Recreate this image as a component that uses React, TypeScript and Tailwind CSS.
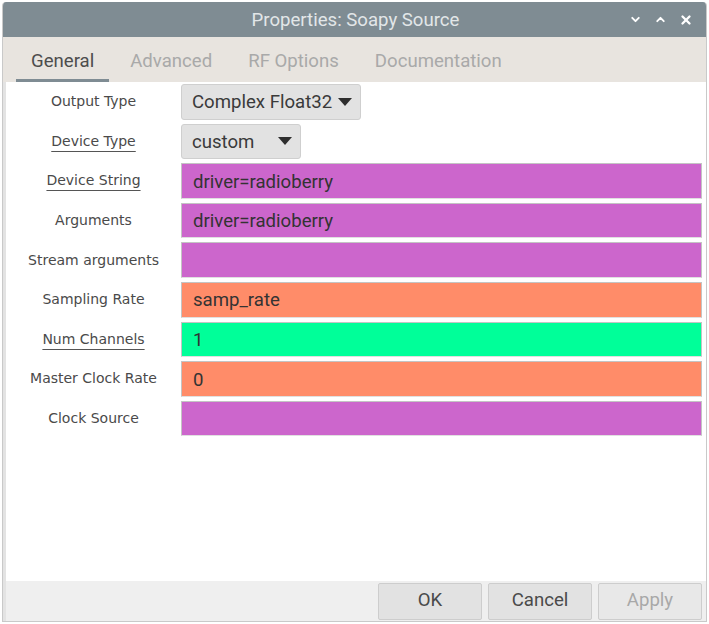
import { ChevronDown, ChevronUp, X } from "lucide-react";

const rows = [
  { label: "Output Type", kind: "combo", value: "Complex Float32", width: "w-[180px]" },
  { label: "Device Type", kind: "combo", value: "custom", width: "w-[120px]", link: true },
  { label: "Device String", kind: "field", value: "driver=radioberry", color: "bg-[#cc66cc]", link: true },
  { label: "Arguments", kind: "field", value: "driver=radioberry", color: "bg-[#cc66cc]" },
  { label: "Stream arguments", kind: "field", value: "", color: "bg-[#cc66cc]" },
  { label: "Sampling Rate", kind: "field", value: "samp_rate", color: "bg-[#ff8c69]" },
  { label: "Num Channels", kind: "field", value: "1", color: "bg-[#00ff99]", link: true },
  { label: "Master Clock Rate", kind: "field", value: "0", color: "bg-[#ff8c69]" },
  { label: "Clock Source", kind: "field", value: "", color: "bg-[#cc66cc]" },
];

const tabs = ["General", "Advanced", "RF Options", "Documentation"];

function Arrow() {
  return (
    <svg width="14" height="8" viewBox="0 0 14 8" className="shrink-0">
      <path d="M0 0 L14 0 L7 8 Z" fill="#2e2e2e" />
    </svg>
  );
}

export default function App() {
  return (
    <div className="w-[709px] h-[624px] bg-white overflow-hidden font-['Roboto',sans-serif]">
      <div className="ml-[2px] mt-[2px] w-[705px] h-[620px] flex flex-col rounded-t-[4px] overflow-hidden border-x border-b border-[#c9c9c9]">
        {/* title bar */}
        <div className="h-[35px] bg-[#7f8c93] flex items-center relative shrink-0">
          <div className="flex-1 text-center text-[18.6px] text-[#e2e6e8] pl-[2px] pt-[2px]">Properties: Soapy Source</div>
          <div className="absolute right-[13px] top-0 h-full flex items-center gap-[12px] text-white">
            <ChevronDown size={13} strokeWidth={3.5} />
            <ChevronUp size={13} strokeWidth={3.5} />
            <X size={14} strokeWidth={4} />
          </div>
        </div>

        {/* tabs */}
        <div className="h-[45px] bg-[#e8e4df] flex items-end pl-[13px] gap-[6px] shrink-0">
          {tabs.map((t, i) => (
            <div
              key={t}
              className={
                "h-full flex items-center px-[15px] text-[18.6px] border-b-[3px] pt-[7px] " +
                (i === 0 ? "border-[#7f8c93] text-[#4d4d4d] px-[14px]" : "border-transparent text-[#a9a9a9]")
              }
            >
              {t}
            </div>
          ))}
        </div>

        {/* content */}
        <div className="flex-1 bg-white border-l-[3px] border-[#e3e3e3] pt-[2px] pr-[4px] flex flex-col gap-[4px]">
          {rows.map((r) => (
            <div key={r.label} className="flex items-center h-[35.6px]">
              <div className="w-[175px] shrink-0 text-center font-['DejaVu_Sans',sans-serif] text-[14px] text-[#4a4a4a]">
                <span className={r.link ? "underline underline-offset-[5px] decoration-[#555]" : ""}>{r.label}</span>
              </div>
              {r.kind === "combo" ? (
                <div
                  className={
                    r.width +
                    " h-full bg-[#e2e2e2] border border-[#cfcfcf] rounded-[3px] flex items-center justify-between pl-[10px] pr-[8px] text-[18.6px] text-[#3a3a3a]"
                  }
                >
                  <span className="pt-[3px]">{r.value}</span>
                  <Arrow />
                </div>
              ) : (
                <div
                  className={
                    r.color +
                    " flex-1 h-full border border-[#c4c4c4] border-b-[#e0e0e0] flex items-center pl-[11px] pt-[3px] text-[18.6px] text-[#333]"
                  }
                >
                  {r.value}
                </div>
              )}
            </div>
          ))}
        </div>

        {/* buttons */}
        <div className="h-[40px] bg-[#efefef] border-l-[3px] border-[#e3e3e3] flex items-center justify-end gap-[6px] pr-[4px] shrink-0">
          {["OK", "Cancel", "Apply"].map((b) => (
            <div
              key={b}
              className={
                "w-[104px] h-[37px] bg-[#e2e2e2] border border-[#cdcdcd] rounded-[2px] flex items-center justify-center text-[18.6px] " +
                (b === "Apply" ? "text-[#a8a8a8] bg-[#e8e8e8]" : "text-[#4a4a4a]")
              }
            >
              {b}
            </div>
          ))}
        </div>
      </div>
    </div>
  );
}
